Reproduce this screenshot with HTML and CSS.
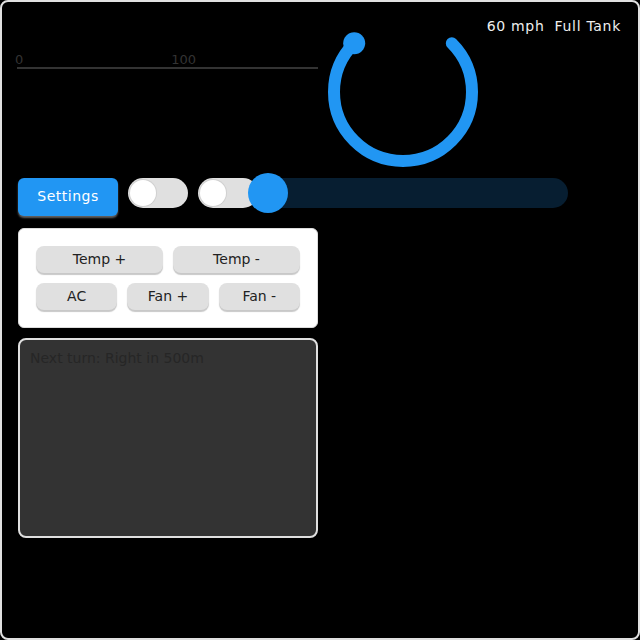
FILE: index.html
```html
<!DOCTYPE html>
<html>
<head>
<meta charset="utf-8">
<link rel="stylesheet" href="styles.css">
</head>
<body>
<div class="screen">
  <div class="top-row">
    <div class="scale">
      <div class="scale-labels">
        <span class="lbl lbl-0">0</span>
        <span class="lbl lbl-100">100</span>
      </div>
      <div class="scale-line"></div>
    </div>
    <svg class="gauge" width="150" height="150" viewBox="328 18 150 150">
      <path d="M 451.8 43.2 A 69 69 0 1 1 354.2 43.2" fill="none" stroke="#2196f3" stroke-width="12" stroke-linecap="round"/>
      <circle cx="354.2" cy="43.2" r="11" fill="#2196f3"/>
    </svg>
    <div class="status">
      <span class="status-item">60 mph</span>
      <span class="status-item">Full Tank</span>
    </div>
  </div>

  <div class="controls">
    <button class="btn-primary">Settings</button>
    <div class="switch"><div class="switch-knob"></div></div>
    <div class="switch"><div class="switch-knob"></div></div>
    <div class="slider"><div class="slider-knob"></div></div>
  </div>

  <div class="climate">
    <div class="climate-row">
      <button class="btn-soft">Temp +</button>
      <button class="btn-soft">Temp -</button>
    </div>
    <div class="climate-row">
      <button class="btn-soft">AC</button>
      <button class="btn-soft">Fan +</button>
      <button class="btn-soft">Fan -</button>
    </div>
  </div>

  <div class="nav">Next turn: Right in 500m</div>
</div>
</body>
</html>
```

FILE: styles.css
```css
* { box-sizing: border-box; }

html, body {
  margin: 0;
  padding: 0;
  background: #000;
}

body {
  font-family: "DejaVu Sans", sans-serif;
  font-size: 14px;
}

.screen {
  width: 640px;
  height: 640px;
  background: #000;
  border: 2px solid #e0e0e0;
  border-radius: 8px;
  padding: 16px;
  display: flex;
  flex-direction: column;
  gap: 10px;
}

.top-row {
  display: flex;
  gap: 10px;
  height: 150px;
}

.scale {
  width: 300px;
  flex: none;
  padding-top: 34px;
}

.scale-labels {
  display: flex;
  height: 15px;
  font-size: 13px;
  line-height: 15px;
  color: #333;
}

.lbl-0 { margin-left: -3px; }
.lbl-100 { margin-left: 148px; }

.scale-line {
  height: 2px;
  margin-left: -1px;
  background: #333;
}

.gauge {
  flex: none;
  overflow: visible;
}

.status {
  flex: 1;
  min-width: 0;
  display: flex;
  justify-content: flex-end;
  gap: 10px;
  color: #eee;
  line-height: 17px;
  letter-spacing: 0.7px;
  margin-right: 1px;
}

.status-item {
  flex: none;
  white-space: nowrap;
}

.controls {
  display: flex;
  gap: 10px;
  height: 40px;
  align-items: flex-start;
}

.btn-primary {
  width: 100px;
  height: 38px;
  border: none;
  border-radius: 6px;
  background: #2196f3;
  color: #fff;
  font-family: inherit;
  font-size: 14px;
  letter-spacing: 0.5px;
  box-shadow: 0 2px 2px rgba(140, 140, 140, 0.7);
  padding: 0 0 2px;
}

.switch {
  width: 60px;
  height: 30px;
  border-radius: 15px;
  background: #e0e0e0;
  padding: 2px;
  flex: none;
}

.switch-knob {
  width: 26px;
  height: 26px;
  border-radius: 50%;
  background: #fff;
  box-shadow: 0 0 0 1px #d0d0d0;
}

.slider {
  position: relative;
  width: 300px;
  height: 30px;
  border-radius: 15px;
  background: #071e31;
  flex: none;
}

.slider-knob {
  position: absolute;
  left: -20px;
  top: -5px;
  width: 40px;
  height: 40px;
  border-radius: 50%;
  background: #2196f3;
}

.climate {
  width: 300px;
  height: 100px;
  background: #fff;
  border: 1px solid #dcdcdc;
  border-radius: 6px;
  padding: 17px;
  display: flex;
  flex-direction: column;
  gap: 10px;
}

.climate-row {
  display: flex;
  gap: 10px;
}

.btn-soft {
  flex: 1;
  height: 27px;
  border: none;
  border-radius: 8px;
  background: #e0e0e0;
  color: #222;
  font-family: inherit;
  font-size: 14px;
  padding: 0 0 1px;
  box-shadow: 0 2px 1px #c8c8c8;
}

.nav {
  width: 300px;
  height: 200px;
  background: #333;
  border: 2px solid #e0e0e0;
  border-radius: 8px;
  padding: 10px;
  color: #262626;
  line-height: 17px;
}
```
